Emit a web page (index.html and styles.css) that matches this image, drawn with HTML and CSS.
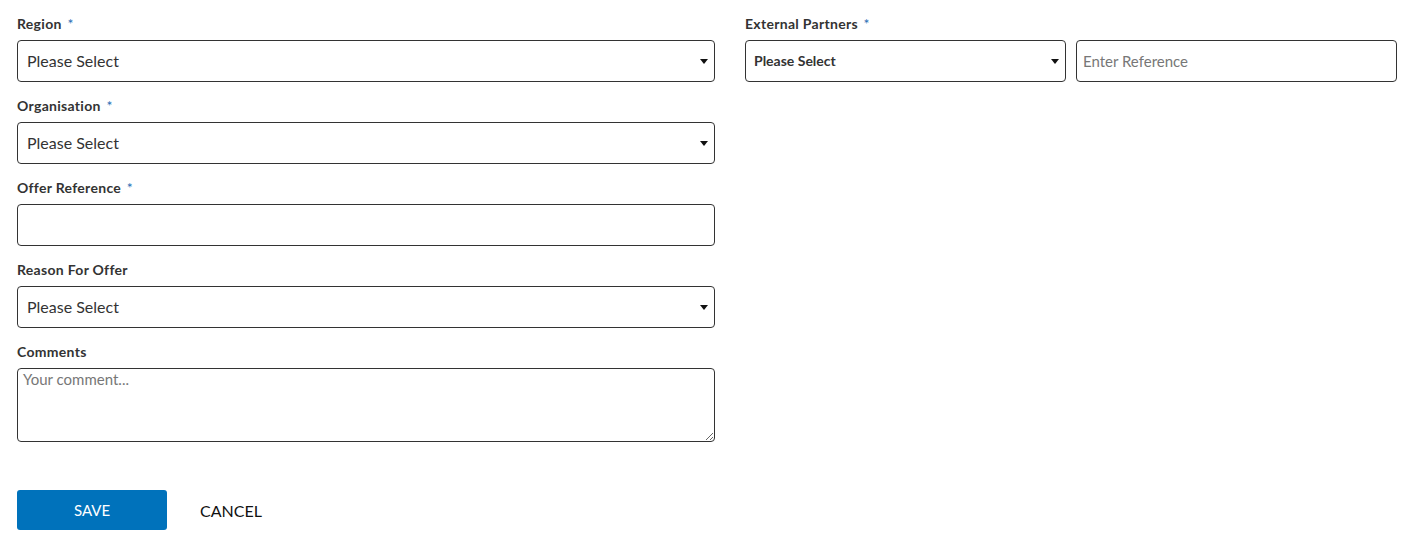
FILE: index.html
```html
<!DOCTYPE html>
<html lang="en">
<head>
  <meta charset="UTF-8" />
  <title>Offer</title>
  <link rel="stylesheet" href="styles.css">
</head>
<body>
  <form class="form">
    <div class="col-main">
      <div class="field">
        <label class="label">Region <span class="req">*</span></label>
        <div class="select-wrap">
          <select class="control"><option>Please Select</option></select>
        </div>
      </div>
      <div class="field">
        <label class="label">Organisation <span class="req">*</span></label>
        <div class="select-wrap">
          <select class="control"><option>Please Select</option></select>
        </div>
      </div>
      <div class="field">
        <label class="label">Offer Reference <span class="req">*</span></label>
        <input class="control" type="text">
      </div>
      <div class="field">
        <label class="label">Reason For Offer</label>
        <div class="select-wrap">
          <select class="control"><option>Please Select</option></select>
        </div>
      </div>
      <div class="field">
        <label class="label">Comments</label>
        <textarea class="comments" placeholder="Your comment..."></textarea>
      </div>
    </div>

    <div class="col-side">
      <div class="field">
        <label class="label">External Partners <span class="req">*</span></label>
        <div class="pair">
          <div class="select-wrap">
            <select class="control small-bold"><option>Please Select</option></select>
          </div>
          <input class="control ref" type="text" placeholder="Enter Reference">
        </div>
      </div>
    </div>
  </form>

  <div class="actions">
    <button class="btn-save" type="button">SAVE</button>
    <button class="btn-cancel" type="button">CANCEL</button>
  </div>
</body>
</html>
```

FILE: styles.css
```css
body {
  margin: 0;
  padding: 15px 17px;
  font-family: Lato, "Open Sans", sans-serif;
  color: #333;
  background: #fff;
}
.form {
  display: grid;
  grid-template-columns: 698px 652px;
  column-gap: 30px;
}
.field {
  display: flex;
  flex-direction: column;
  margin-bottom: 15px;
}
.label {
  font-size: 14px;
  font-weight: bold;
  line-height: 18px;
  letter-spacing: 0.3px;
  margin-bottom: 7px;
  color: #333;
}
.req {
  color: #2a6fb5;
  margin-left: 2px;
  font-weight: normal;
}
.select-wrap {
  position: relative;
}
.select-wrap::after {
  content: "";
  position: absolute;
  right: 7px;
  top: 19px;
  border-left: 4px solid transparent;
  border-right: 4px solid transparent;
  border-top: 5px solid #111;
  pointer-events: none;
}
.control {
  display: block;
  width: 100%;
  box-sizing: border-box;
  height: 42px;
  padding: 0 9px 1px;
  border: 1px solid #333;
  border-radius: 4px;
  background: #fff;
  font-family: Lato, "Open Sans", sans-serif;
  font-size: 16px;
  color: #333;
  appearance: none;
  -webkit-appearance: none;
  outline: none;
}
.small-bold {
  font-size: 14px;
  font-weight: bold;
  padding-left: 8px;
}
.pair {
  display: flex;
  gap: 10px;
}
.pair > * {
  width: 321px;
  flex: none;
}
.ref {
  font-size: 15px;
  padding-left: 6px;
}
.ref::placeholder {
  color: #777;
}
.comments {
  box-sizing: border-box;
  width: 100%;
  height: 74px;
  padding: 1px 5px;
  border: 1px solid #333;
  border-radius: 4px;
  font-family: Lato, "Open Sans", sans-serif;
  font-size: 15px;
  color: #333;
  outline: none;
}
.comments::placeholder {
  color: #777;
}
.actions {
  display: flex;
  align-items: center;
  margin-top: 33px;
}
.btn-save {
  width: 150px;
  height: 40px;
  border: none;
  border-radius: 3px;
  background: #0072bb;
  color: #fff;
  font-family: Lato, "Open Sans", sans-serif;
  font-size: 15px;
  cursor: pointer;
}
.btn-cancel {
  margin-left: 16px;
  border: none;
  background: none;
  padding: 0 17px;
  font-family: Lato, "Open Sans", sans-serif;
  font-size: 16px;
  color: #111;
  cursor: pointer;
}
```
